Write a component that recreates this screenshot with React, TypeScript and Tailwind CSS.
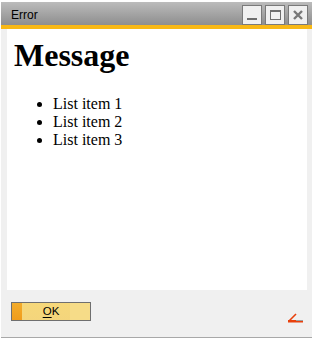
import React from "react";

function TitleButton({ children }: { children: React.ReactNode }) {
  return (
    <div className="flex h-[20px] w-[20px] items-center justify-center border border-[#7a7a7a] bg-[#f0f0f0]">
      {children}
    </div>
  );
}

export default function App() {
  return (
    <div className="h-[342px] w-[314px] overflow-hidden bg-white pl-[1px] pr-[2px] pt-[2px]">
      <div className="flex h-[336px] w-[311px] flex-col border-b border-[#a8a8a8] bg-[#f0f0f0]">
        {/* Title bar */}
        <div
          className="flex h-[23px] items-start justify-between bg-gradient-to-b from-[#bcbcbc] to-[#8e8e8e] pl-[10px] pr-[4px]"
          style={{ fontFamily: '"Liberation Sans", Arial, sans-serif' }}
        >
          <span className="mt-[6px] text-[12px] leading-[14px] text-black">Error</span>
          <div className="mt-[3px] flex gap-[3px]">
            <TitleButton>
              <svg width="14" height="14" viewBox="0 0 14 14">
                <rect x="2" y="10" width="10" height="2" fill="#6e6e6e" />
              </svg>
            </TitleButton>
            <TitleButton>
              <svg width="14" height="14" viewBox="0 0 14 14">
                <rect x="2.5" y="2.5" width="10" height="9" fill="none" stroke="#6e6e6e" strokeWidth="1" />
                <rect x="2" y="2" width="11" height="2" fill="#6e6e6e" />
              </svg>
            </TitleButton>
            <TitleButton>
              <svg width="14" height="14" viewBox="0 0 14 14">
                <path d="M3 3 L11 11 M11 3 L3 11" stroke="#787878" strokeWidth="2.4" />
              </svg>
            </TitleButton>
          </div>
        </div>
        <div className="h-[4px] bg-[#f8b815]" />

        {/* Content */}
        <div className="px-[5px] pl-[6px]">
          <div
            className="h-[261px] bg-white px-[7px] pt-[8px]"
            style={{ fontFamily: '"Liberation Serif", "Times New Roman", serif' }}
          >
            <h1 className="text-[32px] font-bold leading-[37px] text-black">Message</h1>
            <ul className="mt-[21px] list-disc pl-[39px] text-[16px] leading-[18px] text-black">
              <li>List item 1</li>
              <li>List item 2</li>
              <li>List item 3</li>
            </ul>
          </div>
        </div>

        {/* Footer */}
        <div className="flex flex-1 items-start justify-between pl-[10px] pr-[8px] pt-[12px]">
          <button
            className="relative flex h-[19px] w-[80px] items-center justify-center border border-[#6f6f6f] bg-gradient-to-b from-[#f6d87a] to-[#f4d57c] text-[11.5px] text-black"
            style={{ fontFamily: '"Liberation Sans", Arial, sans-serif' }}
          >
            <span className="absolute left-0 top-0 h-full w-[10px] bg-gradient-to-b from-[#f3ac2a] to-[#f09c1c]" />
            <span className="absolute right-0 top-0 h-full w-[20px] bg-[#f6dc88]" />
            <span className="relative">
              <span className="underline underline-offset-[2px]">O</span>K
            </span>
          </button>
          <svg width="16" height="10" viewBox="0 0 16 10" className="mt-[11px]">
            <path d="M1 8 L8 1" stroke="#e8400c" strokeWidth="1.6" />
            <rect x="0" y="7" width="8" height="1" fill="#e8400c" />
            <rect x="8" y="7" width="7" height="1" fill="#a0a0a0" />
            <rect x="0" y="8" width="15" height="1.5" fill="#e8400c" />
          </svg>
        </div>
      </div>
    </div>
  );
}
